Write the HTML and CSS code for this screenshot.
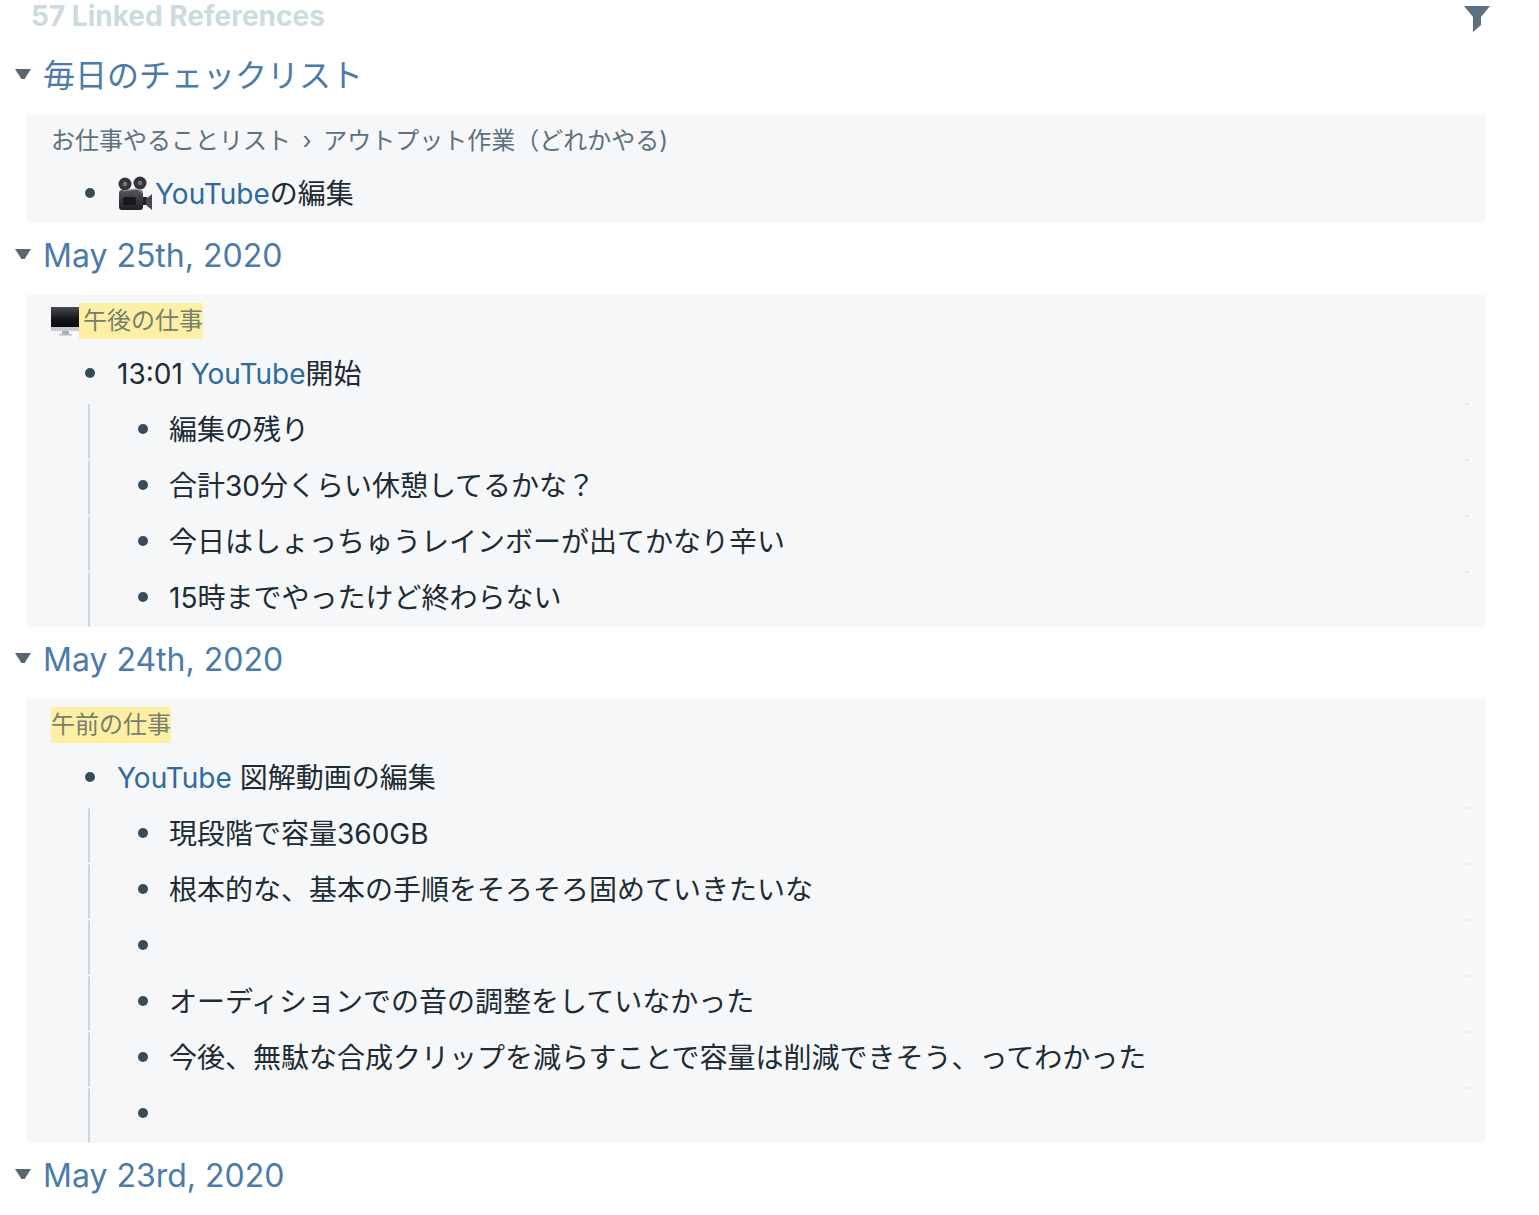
FILE: index.html
```html
<!DOCTYPE html>
<html lang="en">

<head>
  <meta charset="UTF-8">
  <meta name="viewport" content="width=device-width, initial-scale=1.0">
  <title>Linked References</title>
  <link rel="stylesheet" href="styles.css">
</head>

<body>
<div id="references">
  <div class="refs-header">
    <span class="refs-count">57 Linked References</span>
    <svg class="filter-icon" viewBox="0 0 26 26"><polygon points="0,0 26,0 17,11 17,19 9,26 9,11" /></svg>
  </div>

  <div class="page-title"><span class="caret"></span><a>毎日のチェックリスト</a></div>
  <div class="ref-block">
    <div class="crumbs">お仕事やることリスト<span class="crumb-sep">›</span>アウトプット作業（どれかやる)</div>
    <div class="row"><span class="bullet"></span>
      <div class="text">
        <svg class="emoji camera" viewBox="0 0 36 36">
          <defs>
            <linearGradient id="body-shade" x1="0" y1="0" x2="0" y2="1">
              <stop offset="0" stop-color="#55565c" />
              <stop offset="1" stop-color="#1f2023" />
            </linearGradient>
          </defs>
          <circle cx="8" cy="8" r="6.5" fill="#34353a" />
          <circle cx="8" cy="8" r="2.2" fill="#75777d" />
          <circle cx="23" cy="7" r="6.5" fill="#34353a" />
          <circle cx="23" cy="7" r="2.2" fill="#75777d" />
          <rect x="2" y="14" width="24" height="20" rx="3" fill="url(#body-shade)" />
          <path d="M6 15 L20 13 L26 17" fill="none" stroke="#8b8d92" stroke-width="1.2" />
          <rect x="6" y="21" width="13" height="8" rx="2" fill="#17181a" />
          <rect x="26" y="21" width="4" height="8" fill="#222327" />
          <polygon points="29,23 35,18 35,34 29,29" fill="#47494f" />
        </svg><a>YouTube</a>の編集
      </div>
    </div>
  </div>

  <div class="page-title"><span class="caret"></span><a>May 25th, 2020</a></div>
  <div class="ref-block">
    <div class="crumbs">
      <svg class="emoji monitor" viewBox="0 0 28 30">
        <defs>
          <linearGradient id="screen-shade" x1="0" y1="0" x2="0" y2="1">
            <stop offset="0" stop-color="#4a4c50" />
            <stop offset="0.6" stop-color="#141517" />
            <stop offset="1" stop-color="#0c0c0e" />
          </linearGradient>
        </defs>
        <rect x="0" y="0" width="28" height="20" fill="url(#screen-shade)" />
        <rect x="0" y="20" width="28" height="4" fill="#c9ccd0" />
        <rect x="11" y="24" width="7" height="3" fill="#a9acb0" />
        <rect x="8" y="27" width="13" height="1.5" fill="#b9bcc0" />
      </svg><span class="hl hl-after-emoji">午後の仕事</span>
    </div>
    <div class="row"><span class="bullet"></span><div class="text">13:01 <a>YouTube</a>開始</div></div>
    <div class="children">
      <div class="row child"><span class="bullet"></span><div class="text">編集の残り</div></div>
      <div class="row child"><span class="bullet"></span><div class="text">合計30分くらい休憩してるかな？</div></div>
      <div class="row child"><span class="bullet"></span><div class="text">今日はしょっちゅうレインボーが出てかなり辛い</div></div>
      <div class="row child"><span class="bullet"></span><div class="text">15時までやったけど終わらない</div></div>
    </div>
  </div>

  <div class="page-title"><span class="caret"></span><a>May 24th, 2020</a></div>
  <div class="ref-block">
    <div class="crumbs"><span class="hl">午前の仕事</span></div>
    <div class="row"><span class="bullet"></span><div class="text"><a>YouTube</a> 図解動画の編集</div></div>
    <div class="children">
      <div class="row child"><span class="bullet"></span><div class="text">現段階で容量360GB</div></div>
      <div class="row child"><span class="bullet"></span><div class="text">根本的な、基本の手順をそろそろ固めていきたいな</div></div>
      <div class="row child"><span class="bullet"></span><div class="text"></div></div>
      <div class="row child"><span class="bullet"></span><div class="text">オーディションでの音の調整をしていなかった</div></div>
      <div class="row child"><span class="bullet"></span><div class="text">今後、無駄な合成クリップを減らすことで容量は削減できそう、ってわかった</div></div>
      <div class="row child"><span class="bullet"></span><div class="text"></div></div>
    </div>
  </div>

  <div class="page-title"><span class="caret"></span><a>May 23rd, 2020</a></div>
</div>
</body>

</html>
```

FILE: styles.css
```css
body {
  font-family: Inter, "Noto Sans CJK JP", sans-serif;
  margin: 0;
  padding: 0;
  background-color: white;
  color: #202b33;
  overflow: hidden;
}

#references {
  padding: 0 49px 0 0;
}

.refs-header {
  height: 43px;
  display: flex;
  justify-content: space-between;
  padding-left: 31px;
}

.refs-count {
  font-size: 28px;
  line-height: 32px;
  font-weight: 700;
  color: #ced9e0;
}

.filter-icon {
  width: 26px;
  height: 26px;
  margin-top: 6px;
  fill: #5c7080;
}

.page-title {
  height: 72px;
  display: flex;
  align-items: flex-start;
  font-size: 32px;
  line-height: 66px;
  color: #4a7bab;
  padding-left: 15px;
}

.page-title a {
  margin-left: 12px;
}

.caret {
  width: 16px;
  height: 10px;
  margin-top: 26px;
  background-color: #5c6670;
  clip-path: polygon(0 0, 100% 0, 60% 100%, 40% 100%);
}

.ref-block {
  margin-left: 27px;
  margin-right: 5px;
  padding-top: 8px;
  padding-bottom: 2px;
  background-color: #f5f7f9;
}

.crumbs {
  display: flex;
  align-items: center;
  height: 36px;
  margin-bottom: 6px;
  padding-left: 24px;
  font-size: 24px;
  line-height: 36px;
  color: #5c7080;
  white-space: nowrap;
}

.crumb-sep {
  margin: 0 11.5px;
  font-size: 24px;
}

.hl {
  background-color: #fdf0a5;
  color: #77806f;
}

.hl-after-emoji {
  padding-left: 4px;
}

.emoji {
  flex-shrink: 0;
}

.monitor {
  width: 28px;
  height: 30px;
  margin-top: 2px;
}

.camera {
  width: 36px;
  height: 36px;
  vertical-align: -8px;
  margin-right: 2px;
}

.row {
  display: flex;
  height: 56px;
  align-items: center;
  font-size: 28px;
  padding-left: 58px;
}

.bullet {
  width: 10px;
  height: 10px;
  border-radius: 50%;
  background-color: #394b59;
  flex-shrink: 0;
}

.text {
  margin-left: 22px;
  margin-bottom: 3px;
  white-space: nowrap;
}

.text a {
  color: #2f6a9e;
}

.children {
  margin-left: 61px;
}

.child {
  position: relative;
  padding-left: 50px;
}

.child .text {
  margin-left: 21px;
}

/* thread line, offset from the row a little like the original */
.child::before {
  content: "";
  position: absolute;
  left: 0;
  top: 3px;
  bottom: -2px;
  width: 2px;
  background-color: #ced5e0;
  border-radius: 4px 0 0 4px;
}

.child::after {
  content: "";
  position: absolute;
  right: 16px;
  top: 2px;
  width: 4px;
  height: 2px;
  background-color: #e4e7eb;
}
```
